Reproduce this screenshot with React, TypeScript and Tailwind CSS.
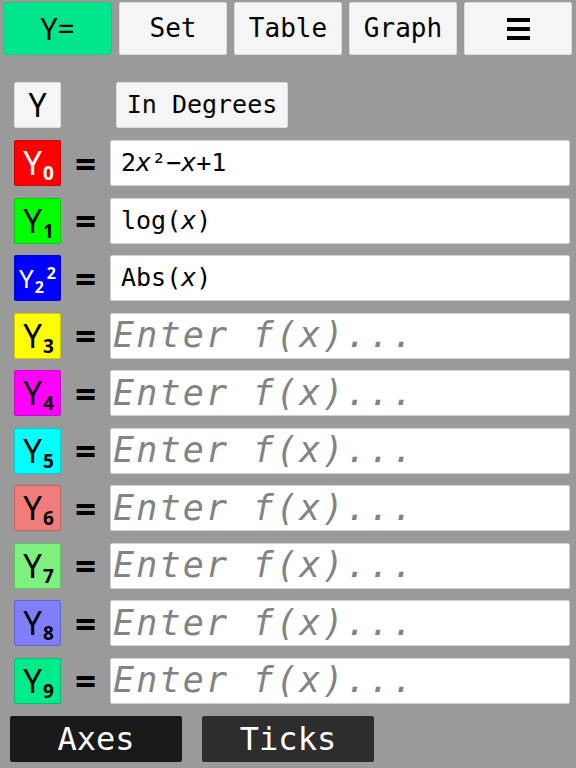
import React from "react";

const mono = { fontFamily: '"DejaVu Sans Mono", "Liberation Mono", monospace' };
const sans = { fontFamily: '"Noto Sans", "Open Sans", sans-serif' };

type Row = { bg: string; fg: string; sub: string; sup?: string; value?: React.ReactNode };

const X = () => <span className="italic">x</span>;

const rows: Row[] = [
  { bg: "bg-[#ff0000]", fg: "text-white", sub: "0", value: (<>2<X />²−<X />+1</>) },
  { bg: "bg-[#00ff00]", fg: "text-black", sub: "1", value: (<>log(<X />)</>) },
  { bg: "bg-[#0000ff]", fg: "text-white", sub: "2", sup: "2", value: (<>Abs(<X />)</>) },
  { bg: "bg-[#ffff00]", fg: "text-black", sub: "3" },
  { bg: "bg-[#ff00ff]", fg: "text-black", sub: "4" },
  { bg: "bg-[#00ffff]", fg: "text-black", sub: "5" },
  { bg: "bg-[#f07c7c]", fg: "text-black", sub: "6" },
  { bg: "bg-[#7ef07e]", fg: "text-black", sub: "7" },
  { bg: "bg-[#7f7ffc]", fg: "text-black", sub: "8" },
  { bg: "bg-[#00ec8a]", fg: "text-black", sub: "9" },
];

export default function App() {
  const tabs = ["Set", "Table", "Graph"];
  return (
    <div className="w-[576px] h-[768px] bg-[#9a9a9a] overflow-hidden flex flex-col">
      <div className="flex gap-[7px] pl-[3px] pt-[2px]">
        <div className="w-[109px] h-[53px] rounded-[3px] bg-[#00e68c] border border-[#22c97f] flex items-center justify-center text-[30px] text-black" style={sans}>
          Y=
        </div>
        {tabs.map((t) => (
          <div key={t} className="w-[108px] h-[53px] rounded-[2px] bg-[#f5f5f5] border border-[#dcdcdc] flex items-center justify-center text-[26px] text-black" style={mono}>
            {t}
          </div>
        ))}
        <div className="w-[108px] h-[53px] rounded-[2px] bg-[#f5f5f5] border border-[#dcdcdc] flex items-center justify-center">
          <div className="flex flex-col gap-[5px]">
            <div className="w-[23px] h-[4px] bg-black" />
            <div className="w-[23px] h-[4px] bg-black" />
            <div className="w-[23px] h-[4px] bg-black" />
          </div>
        </div>
      </div>

      <div className="flex items-center mt-[27px] pl-[14px] gap-[55px]">
        <div className="w-[47px] h-[46px] rounded-[2px] bg-[#f5f5f5] border border-[#dcdcdc] flex items-center justify-center text-[32px] text-black" style={sans}>
          Y
        </div>
        <div className="w-[172px] h-[46px] rounded-[2px] bg-[#f5f5f5] border border-[#dcdcdc] flex items-center justify-center text-[25px] text-black" style={mono}>
          In Degrees
        </div>
      </div>

      <div className="flex flex-col gap-[11.5px] mt-[12px]">
        {rows.map((r, i) => (
          <div key={i} className="flex items-center h-[46px]">
            <div className={`ml-[14px] w-[47px] h-[46px] rounded-[2px] border border-black/20 ${r.bg} ${r.fg} flex items-start justify-center`} style={sans}>
              {r.sup ? (
                <div className="flex items-start pt-[6px]">
                  <span className="text-[26px] leading-[32px]">Y</span>
                  <span className="text-[16px] font-bold mt-[13px] ml-[1px]">{r.sub}</span>
                  <span className="text-[16px] font-bold ml-[3px] -mt-[1px]">{r.sup}</span>
                </div>
              ) : (
                <div className="flex items-start pt-[2px] pl-[2px]">
                  <span className="text-[33px] leading-[40px]">Y</span>
                  <span className="text-[19px] font-bold mt-[16px] ml-[1px]">{r.sub}</span>
                </div>
              )}
            </div>
            <div className="w-[49px] flex justify-center text-[37px] font-bold text-black leading-none" style={sans}>
              =
            </div>
            <div className="w-[460px] h-[46px] bg-white border border-[#d0d0d0] rounded-[2px] flex items-center overflow-hidden">
              {r.value ? (
                <span className="pl-[10px] text-[25px] text-black whitespace-nowrap" style={mono}>{r.value}</span>
              ) : (
                <span className="pl-[2px] text-[35px] italic text-[#838383] tracking-[2.2px] whitespace-nowrap" style={mono}>Enter f(x)...</span>
              )}
            </div>
          </div>
        ))}
      </div>

      <div className="flex mt-[12px] pl-[10px] gap-[20px]">
        <div className="w-[172px] h-[46px] rounded-[2px] bg-[#1a1a1a] flex items-center justify-center text-[32px] text-white" style={mono}>
          Axes
        </div>
        <div className="w-[172px] h-[46px] rounded-[2px] bg-[#2d2d2d] flex items-center justify-center text-[32px] text-white" style={mono}>
          Ticks
        </div>
      </div>
    </div>
  );
}
